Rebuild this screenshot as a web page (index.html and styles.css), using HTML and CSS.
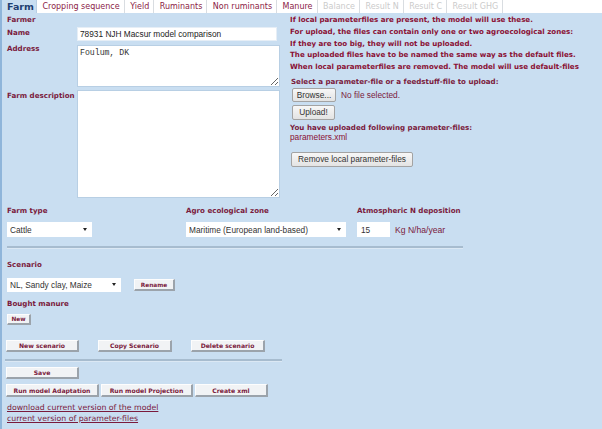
FILE: index.html
```html
<!DOCTYPE html>
<html>
<head>
<meta charset="utf-8">
<link rel="stylesheet" href="styles.css">
</head>
<body>
<div class="tabbar">
  <div class="tabs">
    <span class="tab active">Farm</span>
    <span class="tab">Cropping sequence</span>
    <span class="tab">Yield</span>
    <span class="tab">Ruminants</span>
    <span class="tab">Non ruminants</span>
    <span class="tab">Manure</span>
    <span class="tab off">Balance</span>
    <span class="tab off">Result N</span>
    <span class="tab off">Result C</span>
    <span class="tab off">Result GHG</span>
  </div>
</div>
<div class="panel">
  <div class="top">
    <div class="farm">
      <div class="lbl farmer">Farmer</div>
      <div class="lbl name-l">Name</div>
      <input class="txt name" type="text" value="78931 NJH Macsur model comparison">
      <div class="lbl addr-l">Address</div>
      <textarea class="area addr">Foulum, DK</textarea>
      <div class="lbl desc-l">Farm description</div>
      <textarea class="area desc"></textarea>
    </div>
    <div class="info">
      <div class="warn">
        <div>If local parameterfiles are present, the model will use these.</div>
        <div>For upload, the files can contain only one or two agroecological zones:</div>
        <div>If they are too big, they will not be uploaded.</div>
        <div>The uploaded files have to be named the same way as the default files.</div>
        <div>When local parameterfiles are removed. The model will use default-files</div>
      </div>
      <div class="lbl sel-l">Select a parameter-file or a feedstuff-file to upload:</div>
      <div class="filerow"><span class="nbtn browse">Browse...</span><span class="nofile">No file selected.</span></div>
      <div class="nbtn upload">Upload!</div>
      <div class="lbl up-l">You have uploaded following parameter-files:</div>
      <div class="pfile">parameters.xml</div>
      <div class="nbtn remove">Remove local parameter-files</div>
    </div>
  </div>

  <div class="zone">
    <div class="lbl">Farm type</div>
    <div class="lbl">Agro ecological zone</div>
    <div class="lbl">Atmospheric N deposition</div>
    <div class="ctl"><span class="sel w-type"><select><option>Cattle</option></select></span></div>
    <div class="ctl"><span class="sel w-zone"><select><option>Maritime (European land-based)</option></select></span></div>
    <div class="ctl"><input class="num" type="text" value="15"><span class="unit">Kg N/ha/year</span></div>
  </div>

  <div class="hr hr1"></div>

  <div class="lbl scen-l">Scenario</div>
  <div class="scenrow">
    <span class="sel w-scen"><select><option>NL, Sandy clay, Maize</option></select></span>
    <button class="obtn rename">Rename</button>
  </div>

  <div class="lbl bought-l">Bought manure</div>
  <div class="newrow"><button class="obtn newb">New</button></div>

  <div class="btnrow r1">
    <button class="obtn w73">New scenario</button>
    <button class="obtn w74">Copy Scenario</button>
    <button class="obtn w74">Delete scenario</button>
  </div>

  <div class="hr hr2"></div>

  <div class="btnrow saverow"><button class="obtn w73">Save</button></div>
  <div class="btnrow r2">
    <button class="obtn w93">Run model Adaptation</button>
    <button class="obtn w92">Run model Projection</button>
    <button class="obtn w73">Create xml</button>
  </div>

  <div class="links">
    <a href="#">download current version of the model</a>
    <a href="#">current version of parameter-files</a>
  </div>
</div>
</body>
</html>
```

FILE: styles.css
```css
* { box-sizing: border-box; }
html, body { margin: 0; padding: 0; background: #fff; }
body {
  width: 602px;
  height: 429px;
  overflow: hidden;
  font-family: "DejaVu Sans", Verdana, sans-serif;
  color: #7a1a3c;
}

/* Tabs */
.tabbar { display: flex; height: 13px; background: #fff; }
.tabs {
  display: flex;
  height: 13px;
  background: #fff;
}
.tab {
  padding: 0 4px 0 5.5px;
  border-right: 1px solid #d9dde1;
  font-size: 8px;
  line-height: 13px;
  color: #8b2346;
  white-space: nowrap;
}
.tab.active {
  background: #c9def1;
  color: #1f3f72;
  font-weight: bold;
  font-size: 9.5px;
  padding: 0 2px 0 5px;
  border-left: 2px solid #8fb5da;
  border-right: 1px solid #b9cfe3;
}
.tab.off { color: #cbcbcb; }

/* Panel */
.panel {
  background: #c9def1;
  border-left: 2px solid #8fb5da;
  height: 416px;
  padding: 1px 0 0 5px;
}

.lbl {
  font-weight: bold;
  font-size: 7.1px;
  line-height: 12px;
  white-space: nowrap;
}

.top { display: flex; height: 185px; }
.farm {
  width: 283px;
  display: grid;
  grid-template-columns: 70px 213px;
  align-items: start;
  align-content: start;
}
.farmer { grid-column: 1 / 3; height: 12px; }
.name-l { margin-top: 1px; }
.txt {
  margin-top: 1px;
  width: 200px;
  height: 14px;
  border: 1px solid #e6eef6;
  background: #fff;
  padding: 0 2px;
  font: 8.3px "Liberation Sans", Arial, sans-serif;
  color: #222;
  outline: none;
}
.area {
  width: 203px;
  background: #fff;
  border: 1px solid #b8cfe4;
  padding: 2px 2px;
  font: 8.2px "Liberation Mono", "Courier New", monospace;
  color: #333;
  outline: none;
  resize: both;
  display: block;
}
.addr-l { margin-top: 2px; }
.addr { margin-top: 4px; height: 42px; }
.desc-l { margin-top: 3px; }
.desc { margin-top: 3px; height: 108px; }

.warn {
  font-weight: bold;
  font-size: 7.1px;
  line-height: 11.75px;
  color: #8a1034;
  white-space: nowrap;
}
.sel-l { margin-top: 3px; line-height: 11px; padding-left: 1px; }
.filerow { display: flex; align-items: center; margin-top: 1px; padding-left: 2px; }
.nbtn {
  display: inline-flex;
  align-items: center;
  justify-content: center;
  height: 14px;
  background: linear-gradient(#f7f7f7, #e3e3e3);
  border: 1px solid #a3a3a3;
  border-radius: 2px;
  font: 8.3px "Liberation Sans", Arial, sans-serif;
  color: #333;
  white-space: nowrap;
}
.browse { width: 44px; }
.nofile {
  margin-left: 5px;
  font: 8.3px "Liberation Sans", Arial, sans-serif;
  color: #7a1a3c;
}
.upload { width: 43px; height: 15px; margin: 3px 0 0 2px; display: flex; }
.up-l { margin-top: 2px; line-height: 11px; }
.pfile {
  font: 8.3px "Liberation Sans", Arial, sans-serif;
  line-height: 9px;
  color: #8a1034;
}
.remove { width: 122px; height: 15px; margin: 10px 0 0 1px; display: flex; }

/* zone row */
.zone {
  margin-top: 6px;
  display: grid;
  grid-template-columns: 179px 171px auto;
  grid-template-rows: 12px 15px;
  row-gap: 5px;
}
.ctl { display: flex; align-items: center; height: 15px; }
.sel { position: relative; display: block; }
.sel::after {
  content: "";
  position: absolute;
  right: 5px;
  top: 6px;
  border-left: 2.5px solid transparent;
  border-right: 2.5px solid transparent;
  border-top: 3px solid #222;
}
.sel select {
  appearance: none;
  -webkit-appearance: none;
  border: none;
  border-radius: 0;
  background: #fff;
  height: 15px;
  padding: 0 0 0 3px;
  font: 8.3px "Liberation Sans", Arial, sans-serif;
  color: #333;
  outline: none;
  display: block;
}
.w-type select { width: 85px; }
.w-zone select { width: 160px; }
.w-scen select { width: 114px; height: 14px; }
.w-scen::after { top: 5px; }
.num {
  width: 33px;
  height: 15px;
  border: none;
  background: #fff;
  padding: 0 4px;
  font: 8.3px "Liberation Sans", Arial, sans-serif;
  color: #333;
  outline: none;
}
.unit {
  margin-left: 5px;
  font: 8.6px "Liberation Sans", Arial, sans-serif;
  color: #7a1a3c;
}

.hr {
  height: 3px;
  background: #a7bccf;
  border-bottom: 1px solid #dbe8f4;
}
.hr1 { width: 456px; margin-top: 9px; }
.hr2 { width: 277px; margin: 7px 0 0 -2px; }

.scen-l { margin-top: 10px; }
.scenrow { display: flex; align-items: center; margin-top: 7px; height: 14px; }

.obtn {
  display: inline-flex;
  align-items: center;
  justify-content: center;
  padding: 0;
  margin: 0;
  height: 12px;
  background: #f1f3f5;
  border-style: solid;
  border-width: 1px 2px 2px 1px;
  border-color: #fdfdfd #9ba3ab #9ba3ab #fdfdfd;
  font-family: "DejaVu Sans", Verdana, sans-serif;
  font-weight: bold;
  font-size: 6.1px;
  color: #7a1a3c;
  white-space: nowrap;
}
.rename { width: 41px; margin-left: 13px; font-size: 5.8px; }
.bought-l { margin-top: 6px; }
.newrow { display: flex; margin-top: 4px; height: 11px; }
.newb { width: 24px; height: 11px; font-size: 5.8px; }

.btnrow { display: flex; }
.r1 { margin-top: 15px; gap: 19px; margin-left: -1px; height: 12px; }
.w73 { width: 73px; }
.w74 { width: 74px; }
.w93 { width: 93px; }
.w92 { width: 92px; }
.saverow { margin-top: 5px; margin-left: -1px; height: 12px; }
.r2 { margin-top: 5px; gap: 2px; margin-left: -1px; height: 13px; }
.r2 .obtn { height: 13px; }

.links { display: flex; flex-direction: column; align-items: flex-start; margin-top: 5px; }
.links a {
  color: #7a1a3c;
  font-size: 7.8px;
  line-height: 11px;
  text-decoration: underline;
}
```
